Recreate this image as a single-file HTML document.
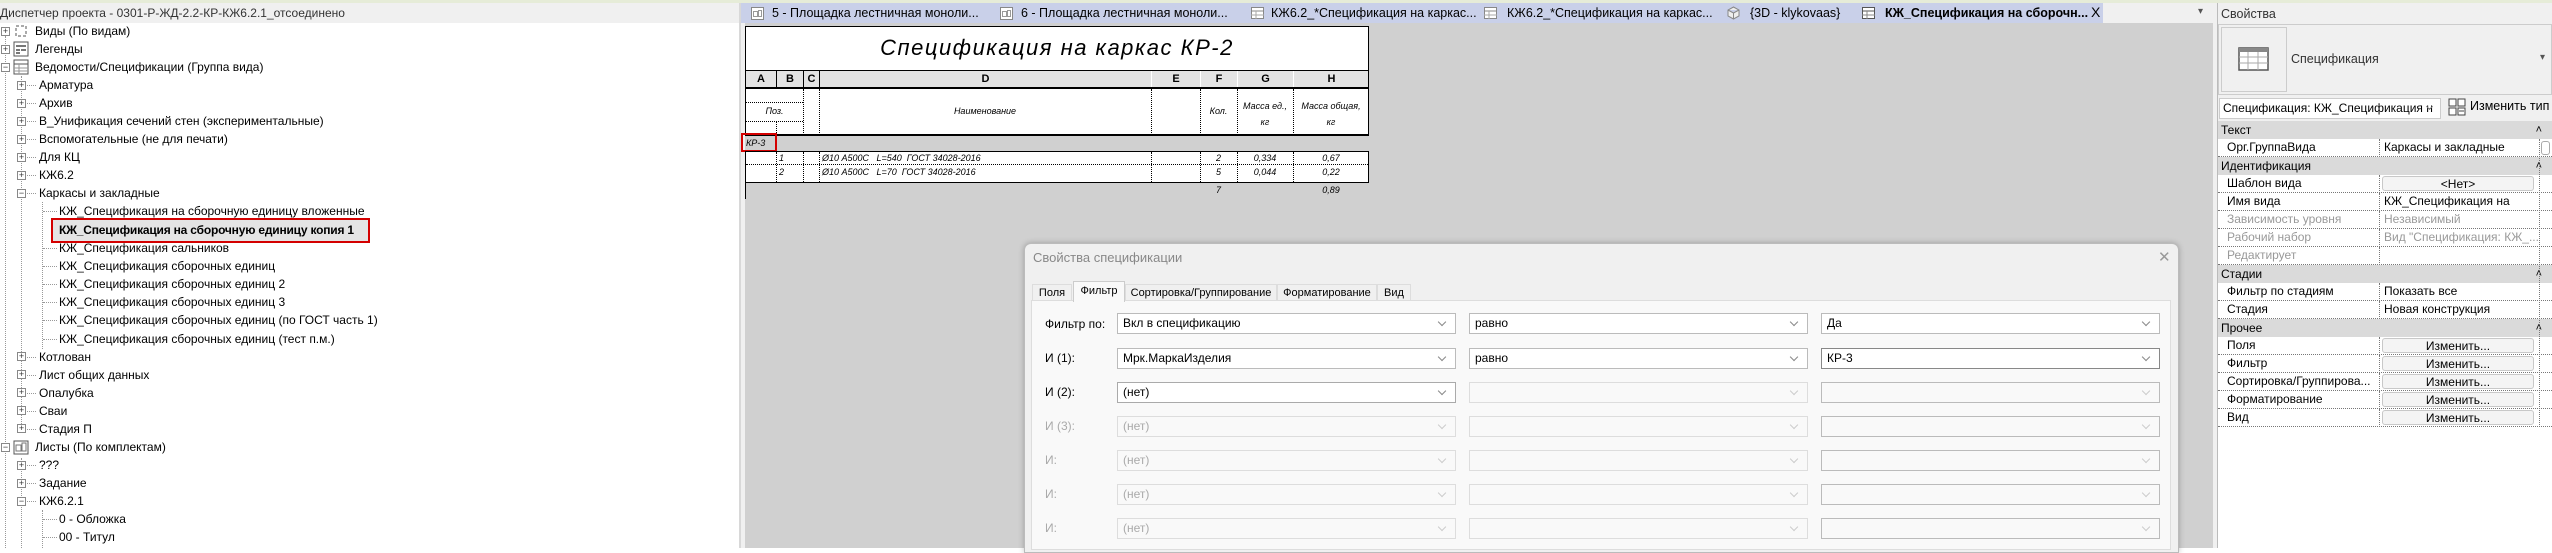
<!DOCTYPE html>
<html><head><meta charset="utf-8">
<style>
*{box-sizing:border-box;margin:0;padding:0}
body{width:2552px;height:548px;overflow:hidden;background:#fff;font-family:"Liberation Sans",sans-serif;font-size:13px;color:#000;position:relative}
.a{position:absolute;white-space:nowrap}
.t{position:absolute;white-space:nowrap;line-height:18px;height:18px;font-size:12px}
.pb{position:absolute;width:9px;height:9px;border:1px solid #888;background:#fff;font-size:9px;line-height:7px;text-align:center;color:#333}
.hd{position:absolute;left:0;width:9px;border-top:1px dotted #999}
.it{font-style:italic;font-size:9px;color:#000}
.cb{position:absolute;height:21px;border:1px solid #bbb;background:#fff;font-size:12px;line-height:19px;padding-left:5px}
.cb.d{background:#f9f9f9;border-color:#ddd;color:#aaa}
.cb .ar{position:absolute;right:10px;top:5px;font-size:0;width:6px;height:6px;border-right:1px solid #888;border-bottom:1px solid #888;transform:rotate(45deg)}
.cb.d .ar{border-color:#ccc}
.pr{position:absolute;left:2218px;width:334px;height:18px;border-bottom:1px dotted #777;font-size:12px;line-height:17px}
.pr .l{position:absolute;left:9px}
.pr .v{position:absolute;left:161px;top:0;width:160px;height:18px;border-left:1px dotted #777;padding-left:4px;overflow:hidden}
.pr.g{color:#999}
.sec{position:absolute;left:2218px;width:334px;height:18px;background:#dadada;line-height:18px;padding-left:3px;font-size:12px}
.sec:after{content:"\02C4";position:absolute;right:10px;top:0;font-size:11px}
.btn{position:absolute;left:165px;top:1px;width:152px;height:15px;border:1px solid #c8c8c8;border-radius:3px;background:#f4f4f4;text-align:center;line-height:14px}
.tb{position:absolute;top:284px;height:17px;font-size:11px;line-height:16px;text-align:center;border:1px solid #ddd;border-bottom:none}
</style></head><body>
<div class="a" style="left:0;top:0;width:2552px;height:3px;background:#e6ecd8"></div>

<!-- PROJECT BROWSER -->
<div class="a" style="left:0;top:3px;width:740px;height:20px;background:#f0f0f0;line-height:20px;font-size:12px;color:#333">Диспетчер проекта - 0301-Р-ЖД-2.2-КР-КЖ6.2.1_отсоединено</div>
<div class="a" style="left:739px;top:3px;width:2px;height:545px;background:#d8d8d8"></div>
<div class="a" style="left:5px;top:36px;height:512px;border-left:1px dotted #999"></div>
<div class="a" style="left:21px;top:76px;height:350px;border-left:1px dotted #999"></div>
<div class="a" style="left:21px;top:458px;height:90px;border-left:1px dotted #999"></div>
<div class="a" style="left:42px;top:202px;height:147px;border-left:1px dotted #999"></div>
<div class="a" style="left:42px;top:510px;height:38px;border-left:1px dotted #999"></div>

<div class="pb" style="left:1px;top:27px">+</div><svg class="a" style="left:13px;top:23px" width="16" height="16"><rect x="3" y="3" width="10" height="10" fill="none" stroke="#555" stroke-dasharray="3 2"/></svg><div class="t" style="left:35px;top:22px">Виды (По видам)</div>
<div class="pb" style="left:1px;top:45px">+</div><svg class="a" style="left:13px;top:41px" width="16" height="16"><rect x="1" y="1" width="14" height="14" fill="#fff" stroke="#555"/><rect x="3" y="4" width="10" height="2" fill="#777"/><rect x="3" y="8" width="4" height="2" fill="#777"/><rect x="8" y="8" width="5" height="2" fill="#777"/><rect x="3" y="11" width="4" height="2" fill="#777"/></svg><div class="t" style="left:35px;top:40px">Легенды</div>
<div class="pb" style="left:1px;top:63px">−</div><svg class="a" style="left:13px;top:59px" width="16" height="16"><rect x="1" y="1" width="14" height="14" fill="#fff" stroke="#555"/><line x1="1" y1="5" x2="15" y2="5" stroke="#555"/><line x1="1" y1="9" x2="15" y2="9" stroke="#999"/><line x1="1" y1="12" x2="15" y2="12" stroke="#999"/><line x1="6" y1="5" x2="6" y2="15" stroke="#999"/></svg><div class="t" style="left:35px;top:58px">Ведомости/Спецификации (Группа вида)</div>

<div class="pb" style="left:17px;top:81px">+</div><div class="hd" style="left:27px;top:85px"></div><div class="t" style="left:39px;top:76px">Арматура</div>
<div class="pb" style="left:17px;top:99px">+</div><div class="hd" style="left:27px;top:103px"></div><div class="t" style="left:39px;top:94px">Архив</div>
<div class="pb" style="left:17px;top:117px">+</div><div class="hd" style="left:27px;top:121px"></div><div class="t" style="left:39px;top:112px">В_Унификация сечений стен (экспериментальные)</div>
<div class="pb" style="left:17px;top:135px">+</div><div class="hd" style="left:27px;top:139px"></div><div class="t" style="left:39px;top:130px">Вспомогательные (не для печати)</div>
<div class="pb" style="left:17px;top:153px">+</div><div class="hd" style="left:27px;top:157px"></div><div class="t" style="left:39px;top:148px">Для КЦ</div>
<div class="pb" style="left:17px;top:171px">+</div><div class="hd" style="left:27px;top:175px"></div><div class="t" style="left:39px;top:166px">КЖ6.2</div>
<div class="pb" style="left:17px;top:189px">−</div><div class="hd" style="left:27px;top:193px"></div><div class="t" style="left:39px;top:184px">Каркасы и закладные</div>
<div class="hd" style="left:43px;top:211px;width:14px"></div><div class="t" style="left:59px;top:202px">КЖ_Спецификация на сборочную единицу вложенные</div>
<div class="a" style="left:51px;top:218px;width:319px;height:25px;border:2px solid #d40000;background:#e4e4e4"></div>
<div class="t" style="left:59px;top:221px;font-weight:bold;letter-spacing:-0.2px">КЖ_Спецификация на сборочную единицу копия 1</div>
<div class="hd" style="left:43px;top:248px;width:14px"></div><div class="t" style="left:59px;top:239px">КЖ_Спецификация сальников</div>
<div class="hd" style="left:43px;top:266px;width:14px"></div><div class="t" style="left:59px;top:257px">КЖ_Спецификация сборочных единиц</div>
<div class="hd" style="left:43px;top:284px;width:14px"></div><div class="t" style="left:59px;top:275px">КЖ_Спецификация сборочных единиц 2</div>
<div class="hd" style="left:43px;top:302px;width:14px"></div><div class="t" style="left:59px;top:293px">КЖ_Спецификация сборочных единиц 3</div>
<div class="hd" style="left:43px;top:320px;width:14px"></div><div class="t" style="left:59px;top:311px">КЖ_Спецификация сборочных единиц (по ГОСТ часть 1)</div>
<div class="hd" style="left:43px;top:339px;width:14px"></div><div class="t" style="left:59px;top:330px">КЖ_Спецификация сборочных единиц (тест п.м.)</div>
<div class="pb" style="left:17px;top:352px">+</div><div class="hd" style="left:27px;top:357px"></div><div class="t" style="left:39px;top:348px">Котлован</div>
<div class="pb" style="left:17px;top:370px">+</div><div class="hd" style="left:27px;top:375px"></div><div class="t" style="left:39px;top:366px">Лист общих данных</div>
<div class="pb" style="left:17px;top:388px">+</div><div class="hd" style="left:27px;top:393px"></div><div class="t" style="left:39px;top:384px">Опалубка</div>
<div class="pb" style="left:17px;top:406px">+</div><div class="hd" style="left:27px;top:411px"></div><div class="t" style="left:39px;top:402px">Сваи</div>
<div class="pb" style="left:17px;top:424px">+</div><div class="hd" style="left:27px;top:429px"></div><div class="t" style="left:39px;top:420px">Стадия П</div>
<div class="pb" style="left:1px;top:443px">−</div><svg class="a" style="left:13px;top:439px" width="18" height="16"><rect x="1" y="2" width="14" height="13" fill="#fff" stroke="#555"/><rect x="3" y="6" width="5" height="6" fill="none" stroke="#777"/><rect x="9" y="4" width="4" height="8" fill="none" stroke="#777"/></svg><div class="t" style="left:35px;top:438px">Листы (По комплектам)</div>
<div class="pb" style="left:17px;top:461px">+</div><div class="hd" style="left:27px;top:465px"></div><div class="t" style="left:39px;top:456px">???</div>
<div class="pb" style="left:17px;top:479px">+</div><div class="hd" style="left:27px;top:483px"></div><div class="t" style="left:39px;top:474px">Задание</div>
<div class="pb" style="left:17px;top:497px">−</div><div class="hd" style="left:27px;top:501px"></div><div class="t" style="left:39px;top:492px">КЖ6.2.1</div>
<div class="hd" style="left:43px;top:519px;width:14px"></div><div class="t" style="left:59px;top:510px">0 - Обложка</div>
<div class="hd" style="left:43px;top:537px;width:14px"></div><div class="t" style="left:59px;top:528px">00 - Титул</div>

<!-- VIEW AREA -->
<div class="a" style="left:741px;top:3px;width:1472px;height:545px;background:#d0d0d0"></div>
<div class="a" style="left:741px;top:23px;width:4px;height:525px;background:#f0f0f0"></div>
<div class="a" style="left:741px;top:3px;width:1362px;height:20px;background:#c9d0e9"></div>
<div class="a" style="left:2103px;top:3px;width:110px;height:20px;background:#f0f0f0"></div>
<div class="a" style="left:2198px;top:6px;font-size:10px;color:#555">▾</div>
<svg class="a" style="left:751px;top:7px" width="13" height="13"><rect x="0.5" y="0.5" width="12" height="12" fill="#fff" stroke="#888"/><rect x="2.5" y="4.5" width="4" height="5" fill="none" stroke="#999"/><rect x="7.5" y="3.5" width="3" height="6" fill="none" stroke="#999"/></svg>
<div class="a" style="left:772px;top:5px;font-size:12.5px;line-height:16px">5 - Площадка лестничная моноли...</div>
<svg class="a" style="left:1000px;top:7px" width="13" height="13"><rect x="0.5" y="0.5" width="12" height="12" fill="#fff" stroke="#888"/><rect x="2.5" y="4.5" width="4" height="5" fill="none" stroke="#999"/><rect x="7.5" y="3.5" width="3" height="6" fill="none" stroke="#999"/></svg>
<div class="a" style="left:1021px;top:5px;font-size:12.5px;line-height:16px">6 - Площадка лестничная моноли...</div>
<svg class="a" style="left:1251px;top:7px" width="13" height="12"><rect x="0.5" y="0.5" width="12" height="11" fill="#fff" stroke="#888"/><line x1="0" y1="4" x2="13" y2="4" stroke="#888"/><line x1="0" y1="8" x2="13" y2="8" stroke="#aaa"/><line x1="5" y1="4" x2="5" y2="12" stroke="#aaa"/></svg>
<div class="a" style="left:1271px;top:5px;font-size:12.5px;line-height:16px">КЖ6.2_*Спецификация на каркас...</div>
<svg class="a" style="left:1484px;top:7px" width="13" height="12"><rect x="0.5" y="0.5" width="12" height="11" fill="#fff" stroke="#888"/><line x1="0" y1="4" x2="13" y2="4" stroke="#888"/><line x1="0" y1="8" x2="13" y2="8" stroke="#aaa"/><line x1="5" y1="4" x2="5" y2="12" stroke="#aaa"/></svg>
<div class="a" style="left:1507px;top:5px;font-size:12.5px;line-height:16px">КЖ6.2_*Спецификация на каркас...</div>
<svg class="a" style="left:1727px;top:6px" width="13" height="14"><path d="M6.5 1 L12 4 L12 10 L6.5 13 L1 10 L1 4 Z M1 4 L6.5 7 L12 4 M6.5 7 V13" fill="#eee" stroke="#888"/></svg>
<div class="a" style="left:1750px;top:5px;font-size:12.5px;line-height:16px">{3D - klykovaas}</div>
<svg class="a" style="left:1862px;top:7px" width="13" height="12"><rect x="0.5" y="0.5" width="12" height="11" fill="#fff" stroke="#555"/><line x1="0" y1="4" x2="13" y2="4" stroke="#555"/><line x1="0" y1="8" x2="13" y2="8" stroke="#888"/><line x1="5" y1="4" x2="5" y2="12" stroke="#888"/></svg>
<div class="a" style="left:1885px;top:5px;font-size:12.5px;line-height:16px;font-weight:bold">КЖ_Спецификация на сборочн...</div>
<div class="a" style="left:2091px;top:4px;font-size:14px">X</div>

<!-- SCHEDULE -->
<div class="a" style="left:745px;top:26px;width:624px;height:157px;background:#fff;border:1px solid #000"></div>
<div class="a" style="left:745px;top:26px;width:624px;height:45px;border-bottom:1px solid #000;text-align:center;font-style:italic;font-size:22px;line-height:44px;letter-spacing:1.5px">Спецификация на каркас КР-2</div>
<div class="a" style="left:746px;top:71px;width:622px;height:16px;background:#e3e3e3"></div>
<div class="a" style="left:746px;top:87px;width:622px;height:2px;background:#000"></div>
<div class="a" style="left:746px;top:71px;width:30px;text-align:center;font-weight:bold;font-size:11px;line-height:16px">A</div>
<div class="a" style="left:776px;top:71px;width:27px;text-align:center;font-weight:bold;font-size:11px;line-height:16px;border-left:1px solid #000">B</div>
<div class="a" style="left:803px;top:71px;width:16px;text-align:center;font-weight:bold;font-size:11px;line-height:16px;border-left:1px solid #000">C</div>
<div class="a" style="left:819px;top:71px;width:332px;text-align:center;font-weight:bold;font-size:11px;line-height:16px;border-left:1px solid #000">D</div>
<div class="a" style="left:1151px;top:71px;width:49px;text-align:center;font-weight:bold;font-size:11px;line-height:16px;border-left:1px solid #fff">E</div>
<div class="a" style="left:1200px;top:71px;width:37px;text-align:center;font-weight:bold;font-size:11px;line-height:16px;border-left:1px solid #fff">F</div>
<div class="a" style="left:1237px;top:71px;width:56px;text-align:center;font-weight:bold;font-size:11px;line-height:16px;border-left:1px solid #fff">G</div>
<div class="a" style="left:1293px;top:71px;width:76px;text-align:center;font-weight:bold;font-size:11px;line-height:16px;border-left:1px solid #fff">H</div>
<div class="a" style="left:803px;top:89px;height:46px;border-left:1px dotted #000"></div>
<div class="a" style="left:819px;top:89px;height:46px;border-left:1px dotted #000"></div>
<div class="a" style="left:1151px;top:89px;height:46px;border-left:1px dotted #000"></div>
<div class="a" style="left:1200px;top:89px;height:46px;border-left:1px dotted #000"></div>
<div class="a" style="left:1237px;top:89px;height:46px;border-left:1px dotted #000"></div>
<div class="a" style="left:1293px;top:89px;height:46px;border-left:1px dotted #000"></div>
<div class="a" style="left:746px;top:102px;width:57px;border-top:1px dotted #000"></div>
<div class="a" style="left:746px;top:121px;width:57px;border-top:1px dotted #000"></div>
<div class="a" style="left:776px;top:121px;height:14px;border-left:1px dotted #000"></div>
<div class="a it" style="left:746px;top:106px;width:57px;text-align:center">Поз.</div>
<div class="a it" style="left:819px;top:106px;width:332px;text-align:center">Наименование</div>
<div class="a it" style="left:1200px;top:106px;width:37px;text-align:center">Кол.</div>
<div class="a it" style="left:1237px;top:98px;width:56px;text-align:center;line-height:16px">Масса ед.,<br>кг</div>
<div class="a it" style="left:1293px;top:98px;width:76px;text-align:center;line-height:16px">Масса общая,<br>кг</div>
<div class="a" style="left:745px;top:134px;width:624px;height:2px;background:#000"></div>
<div class="a" style="left:745px;top:136px;width:624px;height:15px;background:#d0d0d0"></div>
<div class="a" style="left:741px;top:133px;width:36px;height:19px;border:2px solid #d40000"></div>
<div class="a it" style="left:746px;top:138px">КР-3</div>
<div class="a" style="left:745px;top:151px;width:624px;height:1px;background:#000"></div>
<div class="a" style="left:745px;top:152px;width:624px;height:31px;background:#fff;border-left:1px solid #000;border-right:1px solid #000;border-bottom:1px solid #000"></div>
<div class="a" style="left:746px;top:164px;width:622px;border-top:1px dotted #000"></div>
<div class="a" style="left:776px;top:152px;height:30px;border-left:1px dotted #000"></div>
<div class="a" style="left:803px;top:152px;height:30px;border-left:1px dotted #000"></div>
<div class="a" style="left:819px;top:152px;height:30px;border-left:1px dotted #000"></div>
<div class="a" style="left:1151px;top:152px;height:30px;border-left:1px dotted #000"></div>
<div class="a" style="left:1200px;top:152px;height:30px;border-left:1px dotted #000"></div>
<div class="a" style="left:1237px;top:152px;height:30px;border-left:1px dotted #000"></div>
<div class="a" style="left:1293px;top:152px;height:30px;border-left:1px dotted #000"></div>
<div class="a it" style="left:779px;top:152px;line-height:12px">1</div>
<div class="a it" style="left:822px;top:152px;line-height:12px">Ø10 А500С &nbsp;&nbsp;L=540 &nbsp;ГОСТ 34028-2016</div>
<div class="a it" style="left:1200px;top:152px;width:37px;text-align:center;line-height:12px">2</div>
<div class="a it" style="left:1237px;top:152px;width:56px;text-align:center;line-height:12px">0,334</div>
<div class="a it" style="left:1293px;top:152px;width:76px;text-align:center;line-height:12px">0,67</div>
<div class="a it" style="left:779px;top:165px;line-height:14px">2</div>
<div class="a it" style="left:822px;top:165px;line-height:14px">Ø10 А500С &nbsp;&nbsp;L=70 &nbsp;ГОСТ 34028-2016</div>
<div class="a it" style="left:1200px;top:165px;width:37px;text-align:center;line-height:14px">5</div>
<div class="a it" style="left:1237px;top:165px;width:56px;text-align:center;line-height:14px">0,044</div>
<div class="a it" style="left:1293px;top:165px;width:76px;text-align:center;line-height:14px">0,22</div>
<div class="a" style="left:745px;top:183px;height:16px;border-left:1px solid #000"></div>
<div class="a it" style="left:1200px;top:185px;width:37px;text-align:center">7</div>
<div class="a it" style="left:1293px;top:185px;width:76px;text-align:center">0,89</div>

<svg class="a" style="left:1452px;top:257px" width="12" height="18"><path d="M1 1 L1 14 L4 11 L7 17 L9 16 L6 10 L10 10 Z" fill="#fff" stroke="#000"/></svg>

<!-- DIALOG -->
<div class="a" style="left:1024px;top:243px;width:1155px;height:310px;background:#f0f0f0;border:1px solid #bbb;border-radius:7px 7px 0 0;box-shadow:0 0 6px rgba(0,0,0,0.25)"></div>
<div class="a" style="left:1033px;top:250px;font-size:13px;color:#888;line-height:16px">Свойства спецификации</div>
<div class="a" style="left:2158px;top:248px;font-size:15px;color:#999">✕</div>
<div class="a" style="left:1031px;top:300px;width:1140px;height:250px;background:#f9f9f9;border:1px solid #ddd"></div>
<div class="tb" style="left:1032px;width:40px">Поля</div>
<div class="a" style="left:1073px;top:281px;width:52px;height:21px;background:#f9f9f9;border:1px solid #ccc;border-bottom:none;font-size:11px;line-height:18px;text-align:center">Фильтр</div>
<div class="tb" style="left:1125px;width:152px">Сортировка/Группирование</div>
<div class="tb" style="left:1277px;width:100px">Форматирование</div>
<div class="tb" style="left:1377px;width:34px">Вид</div>

<div class="a" style="left:1045px;top:316px;font-size:12px;line-height:16px">Фильтр по:</div>
<div class="cb" style="left:1117px;top:313px;width:339px">Вкл в спецификацию<span class="ar"></span></div>
<div class="cb" style="left:1469px;top:313px;width:339px">равно<span class="ar"></span></div>
<div class="cb" style="left:1821px;top:313px;width:339px">Да<span class="ar"></span></div>

<div class="a" style="left:1045px;top:350px;font-size:12px;line-height:16px">И (1):</div>
<div class="cb" style="left:1117px;top:348px;width:339px">Мрк.МаркаИзделия<span class="ar"></span></div>
<div class="cb" style="left:1469px;top:348px;width:339px">равно<span class="ar"></span></div>
<div class="cb" style="left:1821px;top:348px;width:339px;border-color:#888">КР-3<span class="ar"></span></div>

<div class="a" style="left:1045px;top:384px;font-size:12px;line-height:16px">И (2):</div>
<div class="cb" style="left:1117px;top:382px;width:339px;border-color:#aaa">(нет)<span class="ar"></span></div>
<div class="cb d" style="left:1469px;top:382px;width:339px"><span class="ar"></span></div>
<div class="cb d" style="left:1821px;top:382px;width:339px;border-color:#bbb"><span class="ar"></span></div>

<div class="a" style="left:1045px;top:418px;font-size:12px;line-height:16px;color:#aaa">И (3):</div>
<div class="cb d" style="left:1117px;top:416px;width:339px">(нет)<span class="ar"></span></div>
<div class="cb d" style="left:1469px;top:416px;width:339px"><span class="ar"></span></div>
<div class="cb d" style="left:1821px;top:416px;width:339px;border-color:#bbb"><span class="ar"></span></div>

<div class="a" style="left:1045px;top:452px;font-size:12px;line-height:16px;color:#aaa">И:</div>
<div class="cb d" style="left:1117px;top:450px;width:339px">(нет)<span class="ar"></span></div>
<div class="cb d" style="left:1469px;top:450px;width:339px"><span class="ar"></span></div>
<div class="cb d" style="left:1821px;top:450px;width:339px;border-color:#bbb"><span class="ar"></span></div>

<div class="a" style="left:1045px;top:486px;font-size:12px;line-height:16px;color:#aaa">И:</div>
<div class="cb d" style="left:1117px;top:484px;width:339px">(нет)<span class="ar"></span></div>
<div class="cb d" style="left:1469px;top:484px;width:339px"><span class="ar"></span></div>
<div class="cb d" style="left:1821px;top:484px;width:339px;border-color:#bbb"><span class="ar"></span></div>

<div class="a" style="left:1045px;top:520px;font-size:12px;line-height:16px;color:#aaa">И:</div>
<div class="cb d" style="left:1117px;top:518px;width:339px">(нет)<span class="ar"></span></div>
<div class="cb d" style="left:1469px;top:518px;width:339px"><span class="ar"></span></div>
<div class="cb d" style="left:1821px;top:518px;width:339px;border-color:#bbb"><span class="ar"></span></div>

<!-- PROPERTIES -->
<div class="a" style="left:2213px;top:3px;width:4px;height:545px;background:#f0f0f0"></div>
<div class="a" style="left:2217px;top:3px;width:1px;height:545px;background:#bbb"></div>
<div class="a" style="left:2218px;top:3px;width:334px;height:118px;background:#f0f0f0"></div>
<div class="a" style="left:2221px;top:6px;font-size:12.5px;color:#333;line-height:16px">Свойства</div>
<div class="a" style="left:2218px;top:24px;width:334px;height:71px;border:1px solid #ccc;background:#f0f0f0"></div>
<div class="a" style="left:2221px;top:27px;width:66px;height:65px;border:1px solid #ccc;background:#f0f0f0"></div>
<svg class="a" style="left:2238px;top:47px" width="32" height="25"><rect x="1" y="1" width="29" height="22" fill="#fff" stroke="#555" stroke-width="1.5"/><rect x="1" y="1" width="29" height="4" fill="#888"/><line x1="1" y1="10" x2="30" y2="10" stroke="#aaa"/><line x1="1" y1="16" x2="30" y2="16" stroke="#aaa"/><line x1="10" y1="5" x2="10" y2="23" stroke="#aaa"/><line x1="20" y1="5" x2="20" y2="23" stroke="#aaa"/></svg>
<div class="a" style="left:2291px;top:52px;font-size:12.5px;color:#333">Спецификация</div>
<div class="a" style="left:2540px;top:52px;font-size:10px;color:#555">▾</div>
<div class="a" style="left:2219px;top:98px;width:222px;height:21px;border:1px solid #ccc;background:#fff;font-size:12px;line-height:19px;padding-left:3px;overflow:hidden">Спецификация: КЖ_Спецификация н<span style="position:absolute;right:8px;top:5px;width:5px;height:5px;border-right:1px solid #888;border-bottom:1px solid #888;transform:rotate(45deg)"></span></div>
<svg class="a" style="left:2448px;top:98px" width="18" height="18"><rect x="1" y="1" width="7" height="7" fill="#fff" stroke="#444"/><rect x="10" y="1" width="7" height="7" fill="#fff" stroke="#444"/><rect x="1" y="10" width="7" height="7" fill="#fff" stroke="#444"/><rect x="10" y="10" width="7" height="7" fill="#fff" stroke="#444"/><line x1="11" y1="13" x2="16" y2="13" stroke="#444"/></svg>
<div class="a" style="left:2470px;top:98px;font-size:12.5px;line-height:16px">Изменить тип</div>

<div class="sec" style="top:121px">Текст</div>
<div class="pr" style="top:139px"><span class="l">Орг.ГруппаВида</span><span class="v">Каркасы и закладные</span></div>
<div class="sec" style="top:157px">Идентификация</div>
<div class="pr" style="top:175px"><span class="l">Шаблон вида</span><span class="v"><span class="btn" style="left:2px">&lt;Нет&gt;</span></span></div>
<div class="pr" style="top:193px"><span class="l">Имя вида</span><span class="v">КЖ_Спецификация на сбо...</span></div>
<div class="pr g" style="top:211px"><span class="l">Зависимость уровня</span><span class="v">Независимый</span></div>
<div class="pr g" style="top:229px"><span class="l">Рабочий набор</span><span class="v">Вид "Спецификация: КЖ_...</span></div>
<div class="pr g" style="top:247px"><span class="l">Редактирует</span><span class="v"></span></div>
<div class="sec" style="top:265px">Стадии</div>
<div class="pr" style="top:283px"><span class="l">Фильтр по стадиям</span><span class="v">Показать все</span></div>
<div class="pr" style="top:301px"><span class="l">Стадия</span><span class="v">Новая конструкция</span></div>
<div class="sec" style="top:319px">Прочее</div>
<div class="pr" style="top:337px"><span class="l">Поля</span><span class="v"><span class="btn" style="left:2px">Изменить...</span></span></div>
<div class="pr" style="top:355px"><span class="l">Фильтр</span><span class="v"><span class="btn" style="left:2px">Изменить...</span></span></div>
<div class="pr" style="top:373px"><span class="l">Сортировка/Группирова...</span><span class="v"><span class="btn" style="left:2px">Изменить...</span></span></div>
<div class="pr" style="top:391px"><span class="l">Форматирование</span><span class="v"><span class="btn" style="left:2px">Изменить...</span></span></div>
<div class="pr" style="top:409px"><span class="l">Вид</span><span class="v"><span class="btn" style="left:2px">Изменить...</span></span></div>
<div class="a" style="left:2539px;top:139px;height:288px;border-left:1px dotted #777"></div>
<div class="a" style="left:2541px;top:141px;width:9px;height:14px;border:1px solid #aaa;border-radius:3px;background:#fff"></div>
</body></html>
